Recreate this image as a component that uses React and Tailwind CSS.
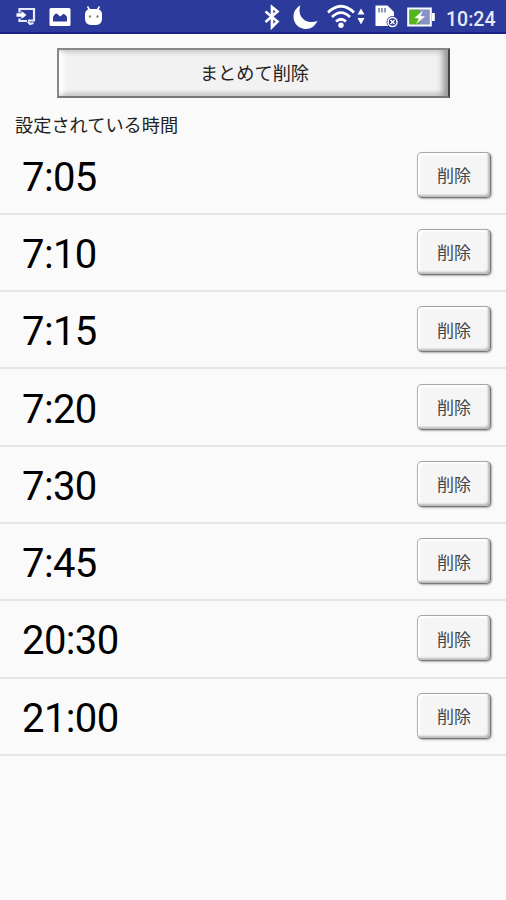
import React from 'react';

const TIMES = ['7:05', '7:10', '7:15', '7:20', '7:30', '7:45', '20:30', '21:00'];

function NotificationIcons() {
  return (
    <svg width="110" height="34" viewBox="0 0 110 34" fill="none">
      {/* Screen cast */}
      <path d="M19.500 13.500v-3.500H34V21.500H28" stroke="#e8eaff" strokeWidth="2.200" />
      <path d="M16.500 14.200h5v-2.200l5 4-5 4V17.800h-5z" fill="#fff" />
      <path d="M19.500 19.500v2.500h7.500M28 22.500l2 2.500 3.500-1" stroke="#e8eaff" strokeWidth="2.200" />
      {/* Picture */}
      <rect x="49.500" y="9" width="21" height="18" rx="1.500" fill="#fff" />
      <path d="M53 22.500v-4.500l2-3 2-.5 2.500 2.500 1 .5 2.500-2.500 2 .5 2 2.500v4.500z" fill="#2b3a9b" />
      {/* Robot head */}
      <path d="M85 14.500Q86 10 90 10h7q4 0 5 4.500v5q0 6.500-6 6.500h-5q-6 0-6-6.500z" fill="#fff" />
      <path d="M87.500 7.500l2.500 4M99.500 7.500l-2.500 4" stroke="#fff" strokeWidth="1.500" />
      <circle cx="90" cy="17.500" r="1.200" fill="#85877a" />
      <circle cx="97.500" cy="17.500" r="1.200" fill="#85877a" />
    </svg>
  );
}

function SystemIcons() {
  return (
    <svg width="176" height="34" viewBox="260 0 176 34" fill="none">
      {/* Bluetooth */}
      <path d="M265.500 12.500l12 10-5.500 5.500V8l5.500 4.500-12 10.500" stroke="#fff" strokeWidth="2.600" />
      {/* Moon */}
      <path d="M300.500 6.500c-4 10 5 20 17 15.500-2.500 5-6.500 8-11.500 8-7 0-12.500-5.500-12.500-12.300 0-4.900 2.500-9.200 7-11.200z" fill="#fff" />
      {/* Wifi */}
      <g stroke="#fff" strokeWidth="2.700">
        <path d="M328 13.500q13-12.500 26 0" />
        <path d="M332 18q9-8.600 18 0" />
        <path d="M336 22.500q5-4.500 10 0" />
      </g>
      <circle cx="341" cy="26.300" r="2.700" fill="#fff" />
      <path d="M357.500 15.500l3.500-6 3.500 6zM357.500 19h7l-3.500 6.500z" fill="#fff" />
      {/* Memory card */}
      <path d="M375.500 6.500h12l6.500 6.500V27h-18.500z" fill="#fff" />
      <path d="M379 9v4.500M382 9v4.500M385 9v4.500" stroke="#7881b5" strokeWidth="1.600" />
      <circle cx="392.500" cy="23" r="6" fill="#2b3a9b" />
      <circle cx="392.500" cy="23" r="4.500" stroke="#fff" strokeWidth="1.500" />
      <path d="M390.500 21l4 4M394.500 21l-4 4" stroke="#fff" strokeWidth="1.500" />
      {/* Battery */}
      <rect x="408.200" y="9.500" width="22.600" height="17" fill="#8791c5" stroke="#fff" strokeWidth="2" />
      <path d="M409.500 10.800h10.500v14.400h-10.500z" fill="#55b51f" />
      <path d="M432 14h2.800v8H432z" fill="#fff" />
      <path d="M423 11.500l-8.500 7.500 4.500.5-3 5.500 9-7.500-4.500-.5z" fill="#fff" />
    </svg>
  );
}

function StatusBar() {
  return (
    <header className="flex h-[34px] shrink-0 items-center border-b-2 border-[#19218c] bg-[#2b3a9b]">
      <NotificationIcons />
      <div className="ml-auto flex items-center">
        <SystemIcons />
        <span className="w-[70px] pt-[7px] pl-[10px] font-[Roboto,sans-serif] text-[19.5px] leading-none font-medium text-[#e6e9f8]">10:24</span>
      </div>
    </header>
  );
}

function TimeRow({ time }) {
  return (
    <li className="flex h-[77.3px] items-center justify-between border-b-2 border-[#e6e6e6] pr-[15px] pb-[1px] pl-[22px]">
      <span className="pt-1.5 font-[Roboto,sans-serif] text-[40px] leading-none tracking-[-0.6px] text-black">{time}</span>
      <button className="h-[46px] w-[74px] rounded-[5px] border border-t-[#a5a5a5] border-r-[#777] border-b-[#777] border-l-[#b0b0b0] bg-[#f5f5f5] text-[17px] leading-none text-[#444] shadow-[inset_-2px_-2px_2px_#bbb,inset_2px_2px_2px_#fff,1px_1px_2px_#aaa]">
        削除
      </button>
    </li>
  );
}

export default function App() {
  return (
    <div className="flex h-[900px] w-[506px] flex-col overflow-hidden bg-[#fafafa] font-['Noto_Sans_CJK_JP',sans-serif]">
      <StatusBar />
      <button className="mt-[14px] ml-[57px] h-[50px] w-[393px] shrink-0 border-2 border-t-[#888] border-r-[#444] border-b-[#777] border-l-[#888] bg-[#f2f2f2] pb-0.5 pl-[2px] text-[18.2px] leading-none text-[#222] shadow-[inset_-6px_0_6px_-1px_#999,inset_5px_0_4px_#fff,inset_0_-3px_4px_#ccc,inset_0_3px_4px_#ddd]">
        まとめて削除
      </button>
      <h2 className="mt-[14px] mb-[1.5px] pl-[15px] text-[18.2px] leading-6 text-[#222]">設定されている時間</h2>
      <ul>
        {TIMES.map((time) => (
          <TimeRow key={time} time={time} />
        ))}
      </ul>
    </div>
  );
}
